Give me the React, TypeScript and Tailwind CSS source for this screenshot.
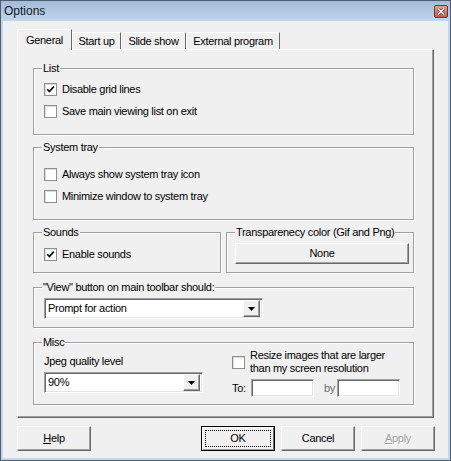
import type { ReactNode } from "react";

const raised =
  "border border-t-white border-l-white border-r-[#696969] border-b-[#696969] shadow-[inset_-1px_-1px_0_#a0a0a0]";
const sunken =
  "border border-t-[#a0a0a0] border-l-[#a0a0a0] border-r-white border-b-white shadow-[inset_1px_1px_0_#696969,inset_-1px_-1px_0_#e3e3e3]";

function CloseButton() {
  return (
    <div className="w-[14px] h-[13px] rounded-[2px] border border-[#6b3a35] bg-gradient-to-b from-[#e3a395] to-[#c5574c] flex items-center justify-center">
      <svg width="8" height="7" viewBox="0 0 8 7">
        <path d="M1 0.5 L7 6.5 M7 0.5 L1 6.5" stroke="#5a2a26" strokeWidth="2.6" />
        <path d="M1 0.5 L7 6.5 M7 0.5 L1 6.5" stroke="#ffffff" strokeWidth="1.5" />
      </svg>
    </div>
  );
}

function Tab({ label, active, className }: { label: string; active?: boolean; className: string }) {
  return (
    <div
      className={`${className} border-l border-t border-r border-l-white border-t-white border-r-[#696969] bg-[#f0f0f0] flex justify-center ${
        active ? "h-[21px] -mb-[1px] pt-[4px]" : "h-[17px] pt-[2px]"
      }`}
    >
      <span className="leading-[13px]">{label}</span>
    </div>
  );
}

function Group({ label, className, children }: { label: string; className: string; children?: ReactNode }) {
  return (
    <div
      className={`relative shrink-0 border border-[#a0a0a0] shadow-[inset_1px_1px_0_#fff,1px_1px_0_#fff] ${className}`}
    >
      <span className="absolute -top-[7px] left-[8px] px-[1px] bg-[#f0f0f0] leading-[13px] whitespace-nowrap">
        {label}
      </span>
      {children}
    </div>
  );
}

function Check({ label, checked }: { label: string; checked?: boolean }) {
  return (
    <div className="flex items-center gap-[5px] h-[13px]">
      <div className="w-[13px] h-[13px] shrink-0 border border-[#8e8f8f] bg-white shadow-[inset_1px_1px_0_#dcdcdc] flex items-center justify-center">
        {checked && (
          <svg width="9" height="9" viewBox="0 0 9 9">
            <path d="M1.2 4.2 L3.4 6.6 L7.8 1.6" stroke="#111" strokeWidth="1.7" fill="none" />
          </svg>
        )}
      </div>
      <span className="leading-[13px] whitespace-nowrap">{label}</span>
    </div>
  );
}

function Combo({ value, className }: { value: string; className: string }) {
  return (
    <div className={`${className} h-[21px] ${sunken} bg-white flex items-center pl-[3px] pr-[2px]`}>
      <span className="flex-1 leading-[13px] whitespace-nowrap">{value}</span>
      <div className={`w-[17px] h-[17px] ${raised} bg-[#f0f0f0] flex items-center justify-center`}>
        <svg width="7" height="4" viewBox="0 0 7 4">
          <path d="M0 0 H7 L3.5 4 Z" fill="#000" />
        </svg>
      </div>
    </div>
  );
}

function Button({ children, className }: { children: ReactNode; className: string }) {
  return (
    <div className={`${className} ${raised} bg-[#f0f0f0] flex items-center justify-center`}>
      {children}
    </div>
  );
}

export default function App() {
  return (
    <div className="w-[451px] h-[461px] bg-[#c3d6eb] border border-[#4f5d6e] flex flex-col font-['Liberation_Sans',Arial,sans-serif] text-[11px] tracking-[-0.3px] text-black">
      {/* title bar */}
      <div className="h-[20px] shrink-0 flex items-center justify-between pl-[3px] pr-[2px] bg-gradient-to-b from-[#a3bcda] to-[#c1d5eb]">
        <span className="text-[12px] tracking-normal text-[#101820]">Options</span>
        <CloseButton />
      </div>

      {/* body */}
      <div className="flex-1 mx-[2px] mb-[2px] bg-[#f0f0f0] pl-[14px] pt-[8px] flex flex-col">
        <div className="flex items-end h-[20px] relative z-10">
          <Tab label="General" active className="w-[55px]" />
          <Tab label="Start up" className="w-[49px]" />
          <Tab label="Slide show" className="w-[65px]" />
          <Tab label="External program" className="w-[94px]" />
        </div>

        <div className="w-[417px] h-[369px] border border-t-white border-l-white border-r-[#696969] border-b-[#696969] shadow-[inset_-1px_-1px_0_#a0a0a0] bg-[#f0f0f0] pl-[15px] pt-[18px] flex flex-col">
          <Group label="List" className="w-[381px] h-[67px] pl-[10px] pt-[14px] flex flex-col gap-[9px]">
            <Check label="Disable grid lines" checked />
            <Check label="Save main viewing list on exit" />
          </Group>

          <Group label="System tray" className="w-[381px] h-[73px] mt-[12px] pl-[10px] pt-[20px] flex flex-col gap-[9px]">
            <Check label="Always show system tray icon" />
            <Check label="Minimize window to system tray" />
          </Group>

          <div className="flex gap-[5px] mt-[12px]">
            <Group label="Sounds" className="w-[188px] h-[41px] pl-[10px] pt-[15px]">
              <Check label="Enable sounds" checked />
            </Group>
            <Group label="Transparenecy color (Gif and Png)" className="w-[188px] h-[41px] pl-[8px] pt-[10px]">
              <Button className="w-[174px] h-[21px]">None</Button>
            </Group>
          </div>

          <Group label={'"View" button on main toolbar should:'} className="w-[381px] h-[41px] mt-[14px] pl-[10px] pt-[10px]">
            <Combo value="Prompt for action" className="w-[219px]" />
          </Group>

          <Group label="Misc" className="w-[381px] h-[63px] mt-[14px] pl-[10px] flex">
            <div className="w-[188px] flex flex-col pt-[12px] gap-[4px]">
              <span className="leading-[13px]">Jpeg quality level</span>
              <Combo value="90%" className="w-[159px]" />
            </div>
            <div className="flex flex-col pt-[6px] gap-[4px]">
              <div className="flex items-center gap-[5px]">
                <div className="w-[13px] h-[13px] shrink-0 border border-[#8e8f8f] bg-white shadow-[inset_1px_1px_0_#dcdcdc]" />
                <span className="leading-[13px]">
                  Resize images that are larger
                  <br />
                  than my screen resolution
                </span>
              </div>
              <div className="flex items-center">
                <span className="leading-[13px] w-[19px]">To:</span>
                <div className={`w-[63px] h-[18px] ${sunken} bg-white`} />
                <span className="leading-[13px] ml-[10px] w-[13px] text-[#6d6d6d]">by</span>
                <div className={`w-[63px] h-[18px] ${sunken} bg-white`} />
              </div>
            </div>
          </Group>
        </div>

        <div className="flex mt-[8px] pr-[13px]">
          <Button className="w-[74px] h-[25px]">
            <span>
              <u>H</u>elp
            </span>
          </Button>
          <div className="flex-1" />
          <div className="w-[74px] h-[25px] border border-black bg-[#f0f0f0] flex">
            <div className="flex-1 border border-t-white border-l-white border-r-[#696969] border-b-[#a0a0a0] p-[2px] flex">
              <div className="flex-1 border border-dotted border-black flex items-center justify-center">OK</div>
            </div>
          </div>
          <Button className="w-[74px] h-[25px] ml-[6px]">Cancel</Button>
          <Button className="w-[74px] h-[25px] ml-[6px]">
            <span className="text-[#a0a0a0] [text-shadow:1px_1px_0_#fff]">
              <u>A</u>pply
            </span>
          </Button>
        </div>
      </div>
    </div>
  );
}
